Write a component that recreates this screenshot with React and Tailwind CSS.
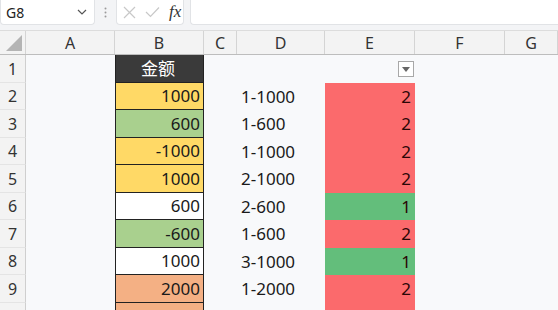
import React from "react";

const FONT = { fontFamily: '"Noto Sans", "Noto Sans CJK SC", sans-serif' };

const fills = {
  y: "bg-[#ffd966]",
  g: "bg-[#a9d08e]",
  w: "bg-white",
  o: "bg-[#f4b084]",
  d: "bg-[#3a3a3a]",
};

const rows = [
  { n: 1, h: "h-[28px]", b: "金额", bf: "d", d: "", e: null },
  { n: 2, h: "h-[27px]", b: "1000", bf: "y", d: "1-1000", e: "2" },
  { n: 3, h: "h-[28px]", b: "600", bf: "g", d: "1-600", e: "2" },
  { n: 4, h: "h-[27px]", b: "-1000", bf: "y", d: "1-1000", e: "2" },
  { n: 5, h: "h-[28px]", b: "1000", bf: "y", d: "2-1000", e: "2" },
  { n: 6, h: "h-[27px]", b: "600", bf: "w", d: "2-600", e: "1" },
  { n: 7, h: "h-[28px]", b: "-600", bf: "g", d: "1-600", e: "2" },
  { n: 8, h: "h-[27px]", b: "1000", bf: "w", d: "3-1000", e: "1" },
  { n: 9, h: "h-[28px]", b: "2000", bf: "o", d: "1-2000", e: "2" },
  { n: "", h: "h-[27px]", b: "", bf: "o", d: "", e: "" },
];

function Toolbar() {
  return (
    <div className="flex h-[30px] items-start bg-[#f3f4f6]">
      <div className="flex h-[25px] w-[95px] items-center justify-between rounded-b-[4px] border border-t-0 border-[#e1e3e6] bg-white pl-[5px] pr-[7px]">
        <span className="text-[14px] text-[#222]">G8</span>
        <svg width="10" height="6" viewBox="0 0 10 6">
          <path d="M1 1 L5 5 L9 1" fill="none" stroke="#555" strokeWidth="1.2" />
        </svg>
      </div>
      <div className="flex h-[25px] w-[21px] items-center justify-center">
        <svg width="3" height="11" viewBox="0 0 3 11">
          <circle cx="1.5" cy="1.5" r="1" fill="#9a9a9a" />
          <circle cx="1.5" cy="5.5" r="1" fill="#9a9a9a" />
          <circle cx="1.5" cy="9.5" r="1" fill="#9a9a9a" />
        </svg>
      </div>
      <div className="flex h-[25px] w-[68px] items-center gap-[9px] rounded-b-[4px] border border-t-0 border-[#e1e3e6] bg-white pl-[6px]">
        <svg width="13" height="13" viewBox="0 0 13 13">
          <path d="M1 1 L12 12 M12 1 L1 12" stroke="#c8c8c8" strokeWidth="1.2" />
        </svg>
        <svg width="15" height="12" viewBox="0 0 15 12">
          <path d="M1 6 L5.5 10.5 L14 1.5" fill="none" stroke="#c8c8c8" strokeWidth="1.2" />
        </svg>
        <span
          className="text-[17px] italic text-[#333]"
          style={{ fontFamily: '"Liberation Serif", serif' }}
        >
          fx
        </span>
      </div>
      <div className="ml-[6px] h-[25px] flex-1 rounded-bl-[4px] border border-t-0 border-r-0 border-[#e1e3e6] bg-white" />
    </div>
  );
}

function HeaderRow() {
  const cols = [
    ["A", "w-[89px]"],
    ["B", "w-[89px]"],
    ["C", "w-[33px]"],
    ["D", "w-[88px]"],
    ["E", "w-[90px]"],
    ["F", "w-[90px]"],
    ["G", "flex-1"],
  ];
  return (
    <div className="flex h-[25px] border-b border-t border-b-[#bdbdbd] border-t-[#dcdcdc] bg-[#f3f3f3]">
      <div className="relative w-[26px] shrink-0 border-r border-[#d4d4d4]">
        <svg className="absolute bottom-[3px] right-[3px]" width="16" height="16" viewBox="0 0 16 16">
          <path d="M16 0 L16 16 L0 16 Z" fill="#b4b4b4" />
        </svg>
      </div>
      {cols.map(([c, w]) => (
        <div
          key={c}
          className={`${w} flex shrink-0 items-center justify-center border-r border-[#d4d4d4] pt-[1px] text-[16px] text-[#333]`}
        >
          {c}
        </div>
      ))}
    </div>
  );
}

function Row({ r }) {
  return (
    <div className={`flex ${r.h}`}>
      <div className="flex w-[26px] shrink-0 items-center justify-center border-b border-r border-b-[#e4e4e4] border-r-[#cfcfcf] bg-[#f3f3f3] text-[16px] text-[#333]">
        {r.n}
      </div>
      <div className="w-[89px] shrink-0" />
      <div
        className={`${fills[r.bf]} flex w-[89px] shrink-0 items-center border-x border-b border-[#222] pr-[3px] text-[17px] ${
          r.bf === "d" ? "justify-center text-white" : "justify-end text-[#1a1a1a]"
        }`}
      >
        {r.b}
      </div>
      <div className="w-[33px] shrink-0" />
      <div className="flex w-[88px] shrink-0 items-center pl-[4px] text-[17px] text-[#1a1a1a]">
        {r.d}
      </div>
      {r.e === null ? (
        <div className="flex w-[90px] shrink-0 items-center justify-end pr-[1px]">
          <div className="flex h-[16px] w-[16px] items-center justify-center border border-[#a8a8a8] bg-white">
            <svg width="8" height="5" viewBox="0 0 8 5">
              <path d="M0 0 L8 0 L4 5 Z" fill="#666" />
            </svg>
          </div>
        </div>
      ) : (
        <div
          className={`${
            r.e === "1" ? "bg-[#63be7b]" : "bg-[#fb6a6c]"
          } flex w-[90px] shrink-0 items-center justify-end pr-[4px] text-[17px] text-[#2a0606]`}
        >
          {r.e}
        </div>
      )}
      <div className="flex-1" />
    </div>
  );
}

export default function App() {
  return (
    <div className="h-[310px] w-[558px] overflow-hidden bg-[#f8f9fb]" style={FONT}>
      <Toolbar />
      <HeaderRow />
      {rows.map((r, i) => (
        <Row key={i} r={r} />
      ))}
    </div>
  );
}
